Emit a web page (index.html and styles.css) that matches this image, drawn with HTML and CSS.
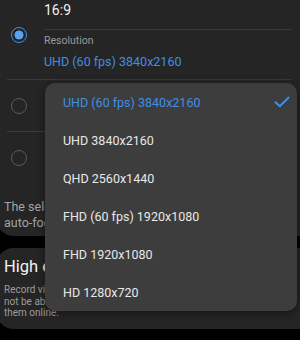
FILE: index.html
```html
<!DOCTYPE html>
<html lang="en">
<head>
    <meta charset="UTF-8">
    <meta name="viewport" content="width=device-width, initial-scale=1.0">
    <title>Video size</title>
    <link rel="stylesheet" href="styles.css">
</head>
<body>
    <div class="screen">
        <div class="card card-top">
            <div class="option">
                <div class="radio-col"><span class="radio checked"></span></div>
                <div class="option-body">
                    <div class="option-title">16:9</div>
                    <div class="sub-label">Resolution</div>
                    <div class="sub-value">UHD (60 fps) 3840x2160</div>
                </div>
            </div>
            <div class="divider"></div>
            <div class="option short">
                <div class="radio-col"><span class="radio"></span></div>
                <div class="option-body"></div>
            </div>
            <div class="divider"></div>
            <div class="option short">
                <div class="radio-col"><span class="radio"></span></div>
                <div class="option-body"></div>
            </div>
            <p class="note">The selected video size does not support<br>auto-focus tracking or video effects.</p>
        </div>

        <div class="card card-bottom">
            <div class="card-title">High efficiency video</div>
            <p class="card-desc">Record videos in HEVC format to save space. Other devices may<br>not be able to play these videos and you may not be able to share<br>them online.</p>
        </div>

        <ul class="dropdown">
            <li class="selected">UHD (60 fps) 3840x2160
                <svg class="check" width="16" height="12" viewBox="0 0 16 12"><path d="M1.5 6.2 L5.8 10.2 L14.5 1.6" fill="none" stroke="#3f8fe3" stroke-width="2" stroke-linecap="round" stroke-linejoin="round"/></svg>
            </li>
            <li>UHD 3840x2160</li>
            <li>QHD 2560x1440</li>
            <li>FHD (60 fps) 1920x1080</li>
            <li>FHD 1920x1080</li>
            <li>HD 1280x720</li>
        </ul>
    </div>
</body>
</html>
```

FILE: styles.css
```css
body {
    margin: 0;
    background: #000;
    font-family: Roboto, "Noto Sans", sans-serif;
    color: #f0f0f0;
    width: 300px;
    height: 340px;
    overflow: hidden;
}
.screen {
    display: flow-root;
    position: relative;
    margin-left: -4px;
    width: 330px;
}
.card {
    background: #252525;
    border-radius: 18px;
}
.card-top {
    margin-top: -9px;
    padding-bottom: 5px;
    border-radius: 0 0 18px 18px;
}
.option {
    display: flex;
    align-items: center;
    height: 88px;
}
.option.short {
    height: 51px;
}
.radio-col {
    width: 38px;
    padding-left: 4px;
    display: flex;
    justify-content: center;
}
.radio {
    width: 14px;
    height: 14px;
    border: 1.5px solid #5a5a5a;
    border-radius: 50%;
    box-sizing: content-box;
}
.radio.checked {
    border-color: #3f8fe3;
    background: radial-gradient(circle, #5a9ff0 0, #5a9ff0 4.2px, #252525 4.8px);
}
.option-body {
    flex: 1;
    margin-left: 6px;
    margin-right: 34px;
}
.option-title {
    font-size: 14px;
    line-height: 38px;
    border-bottom: 1px solid #3a3a3a;
}
.sub-label {
    font-size: 10.5px;
    line-height: 13px;
    color: #9a9a9a;
    margin-top: 4px;
}
.sub-value {
    font-size: 12.5px;
    line-height: 18px;
    color: #3f8fe3;
    margin-top: 6px;
    margin-bottom: 9px;
}
.divider {
    height: 1px;
    background: #3a3a3a;
    margin: 0 34px 0 11px;
}
.note {
    margin: 16px 0 0 8px;
    font-size: 12.5px;
    line-height: 16px;
    color: #a3a3a3;
}
.card-bottom {
    margin-top: 12px;
    padding: 9px 0 10px 8px;
}
.card-title {
    font-size: 16.5px;
    line-height: 20px;
    color: #f2f2f2;
}
.card-desc {
    margin: 7px 0 0;
    font-size: 10px;
    line-height: 11.5px;
    color: #9c9c9c;
}
.dropdown {
    position: absolute;
    left: 49px;
    top: 83px;
    width: 252px;
    margin: 0;
    padding: 0;
    list-style: none;
    background: #3d3d3d;
    border-radius: 10px;
    box-shadow: 0 2px 8px rgba(0, 0, 0, 0.45);
}
.dropdown li {
    display: flex;
    align-items: center;
    justify-content: space-between;
    height: 38px;
    padding: 0 7px 0 18px;
    font-size: 12.5px;
    color: #e8e8e8;
}
.dropdown li.selected {
    color: #3f8fe3;
}
```
